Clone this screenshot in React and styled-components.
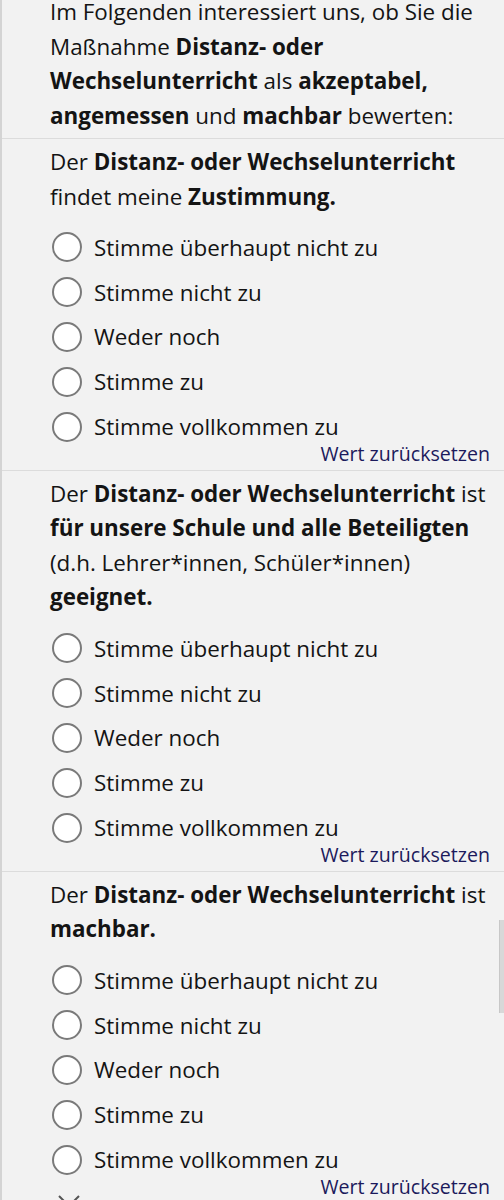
import React from "react";
import styled, { createGlobalStyle } from "styled-components";

const GlobalStyle = createGlobalStyle`
  html, body {
    margin: 0;
    padding: 0;
    background: #f2f2f2;
    overflow: hidden;
  }
  body {
    font-family: "Open Sans", "Noto Sans", sans-serif;
    color: #141414;
  }
`;

const Page = styled.div`
  position: relative;
  height: 1200px;
  overflow: hidden;
  background: #f2f2f2;
  border-left: 2px solid #d4d4d4;
  box-sizing: border-box;
`;

const Inner = styled.div`
  margin-top: -5px;
`;

const Section = styled.section`
  padding: ${(p) => (p.intro ? "0 12px 5px 48px" : "6px 14px 5px 48px")};
  border-top: ${(p) => (p.intro ? "none" : "1px solid #dcdcdc")};
`;

const Text = styled.p`
  margin: 0;
  font-size: 22.4px;
  line-height: 34.5px;

  b {
    font-weight: 700;
  }
`;

const Options = styled.div`
  display: flex;
  flex-direction: column;
  margin-top: 11px;
`;

const Option = styled.label`
  display: flex;
  align-items: center;
  height: 44.8px;
  gap: 12px;
  padding-left: 2px;
  font-size: 22.4px;
  cursor: pointer;
`;

const Radio = styled.span`
  width: 26px;
  height: 26px;
  border-radius: 50%;
  border: 2px solid #7a7a7a;
  background: #ffffff;
  flex-shrink: 0;
`;

const ResetRow = styled.div`
  display: flex;
  justify-content: flex-end;
  margin-top: -6px;
`;

const ResetLink = styled.a`
  font-size: 19.6px;
  line-height: 22px;
  color: #1c1a5c;
  text-decoration: none;
  cursor: pointer;
`;

const NextHint = styled.div`
  margin-top: -10px;
  padding-left: 54px;
  height: 30px;
`;

const ScrollThumb = styled.div`
  position: absolute;
  right: 0;
  top: 920px;
  width: 4px;
  height: 93px;
  background: #d8d8d8;
  border-left: 1px solid #c8c8c8;
`;

const choices = [
  "Stimme überhaupt nicht zu",
  "Stimme nicht zu",
  "Weder noch",
  "Stimme zu",
  "Stimme vollkommen zu",
];

const Question = ({ children }) => (
  <Section>
    <Text>{children}</Text>
    <Options>
      {choices.map((c) => (
        <Option key={c}>
          <Radio />
          {c}
        </Option>
      ))}
    </Options>
    <ResetRow>
      <ResetLink>Wert zurücksetzen</ResetLink>
    </ResetRow>
  </Section>
);

export default function App() {
  return (
    <>
      <GlobalStyle />
      <Page>
        <Inner>
          <Section intro>
            <Text>
              Im Folgenden interessiert uns, ob Sie die Maßnahme{" "}
              <b>Distanz- oder Wechselunterricht</b> als <b>akzeptabel,</b>{" "}
              <b>angemessen</b> und <b>machbar</b> bewerten:
            </Text>
          </Section>
          <Question>
            Der <b>Distanz- oder Wechselunterricht</b> findet meine{" "}
            <b>Zustimmung.</b>
          </Question>
          <Question>
            Der <b>Distanz- oder Wechselunterricht</b> ist{" "}
            <b>für unsere Schule und alle Beteiligten</b> (d.h. Lehrer*innen,
            Schüler*innen) <b>geeignet.</b>
          </Question>
          <Question>
            Der <b>Distanz- oder Wechselunterricht</b> ist <b>machbar.</b>
          </Question>
          <NextHint>
            <svg width="26" height="26" viewBox="0 0 26 26">
              <path
                d="M3 3 L23 23 M23 3 L3 23"
                stroke="#555"
                strokeWidth="2"
                fill="none"
              />
            </svg>
          </NextHint>
        </Inner>
        <ScrollThumb />
      </Page>
    </>
  );
}
